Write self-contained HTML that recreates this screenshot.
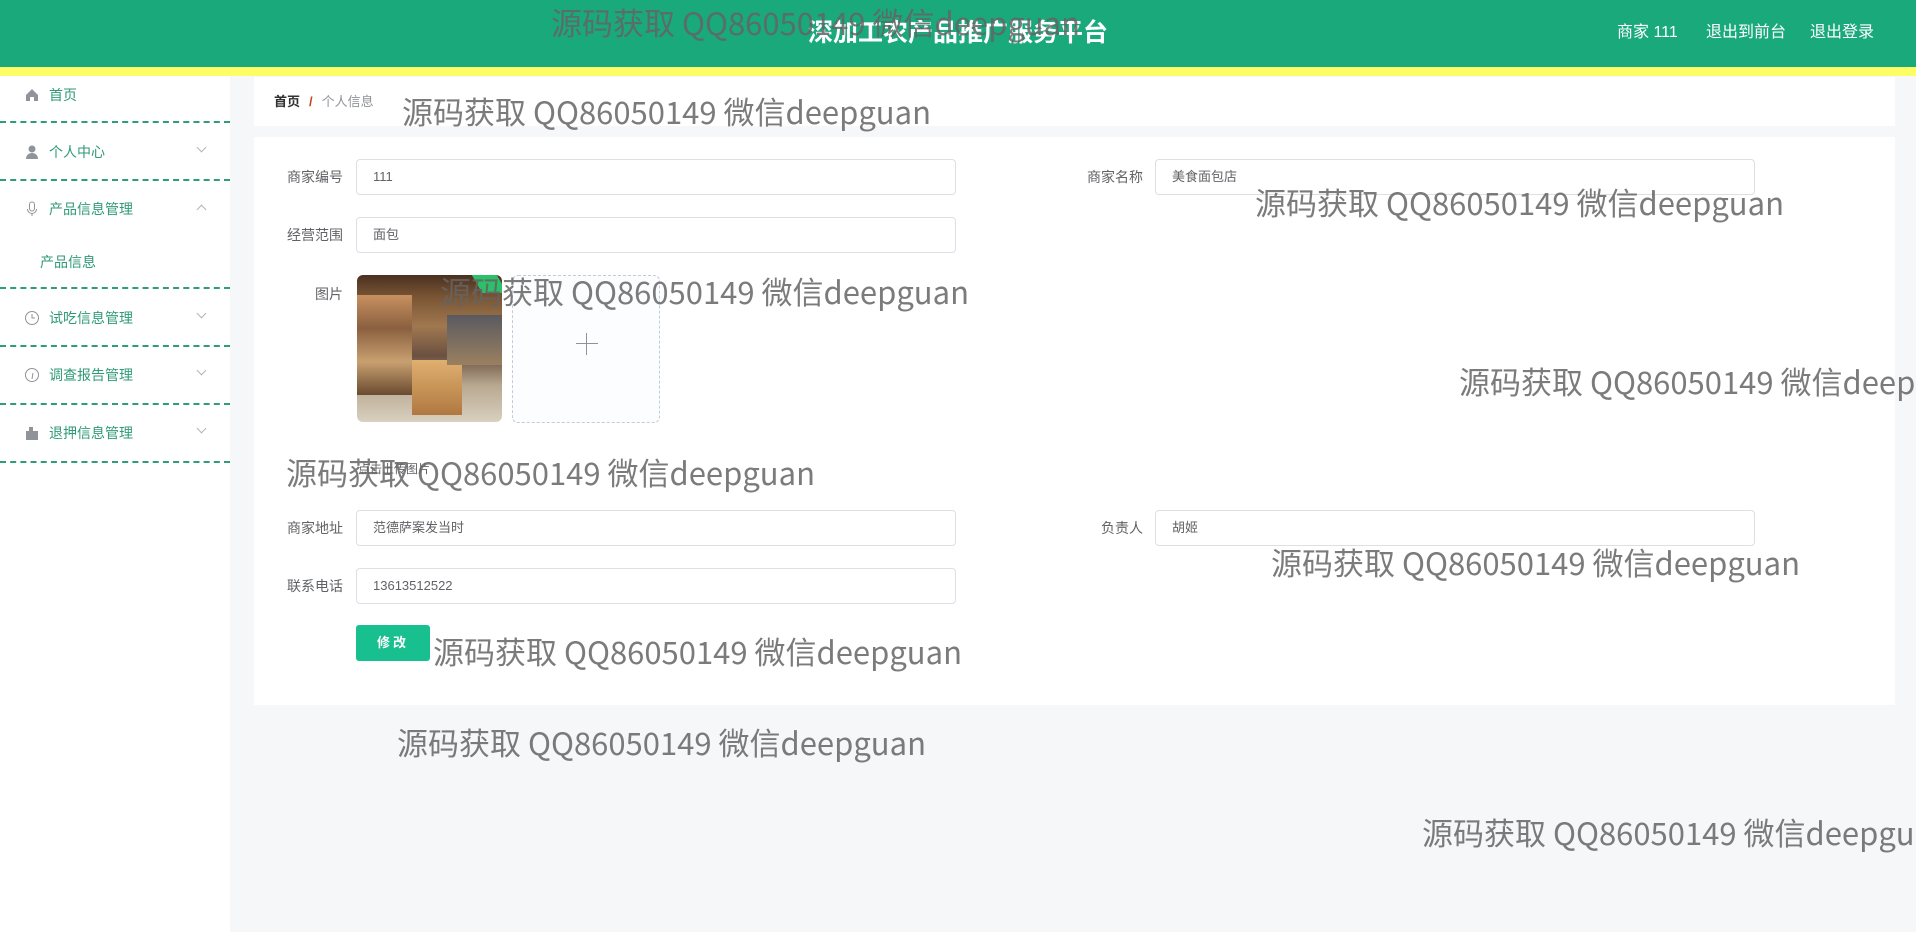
<!DOCTYPE html>
<html><head><meta charset="utf-8"><style>
*{margin:0;padding:0;box-sizing:border-box}
body{width:1916px;height:932px;overflow:hidden;background:#f6f7f9;font-family:"Liberation Sans","Noto Sans CJK SC",sans-serif;position:relative}
.a{position:absolute}
.hdr{left:0;top:0;width:1916px;height:67px;background:#1aa97a}
.yl{left:0;top:67px;width:1916px;height:9px;background:#fdfd66}
.title{left:0;width:1916px;top:15px;text-align:center;color:#fff;font-size:25px;font-weight:bold;line-height:36px}
.nav{top:22px;color:#fff;font-size:16px;line-height:22px}
.side{left:0;top:76px;width:230px;height:856px;background:#fff}
.mi{left:49px;color:#2f9a76;font-size:14px;line-height:20px}
.ic{left:24px;width:16px;height:16px}
.dl{left:0;width:230px;height:0;border-top:2px dashed #2e9e78}
.arr{left:198px;width:7px;height:7px;border-right:1px solid #b0b3b8;border-bottom:1px solid #b0b3b8;transform:rotate(45deg)}
.card{background:#fff}
.lb{font-size:14px;color:#606266;text-align:right;width:80px;line-height:20px}
.in{border:1px solid #dcdfe6;border-radius:4px;background:#fff;height:36px;font-size:13px;color:#606266;padding-left:16px;line-height:34px}
.wm{font-family:"Noto Sans CJK SC","Liberation Sans",sans-serif;font-size:31px;color:rgba(100,100,100,.85);line-height:40px;white-space:nowrap}
</style></head><body>
<div class="a hdr"></div><div class="a yl"></div>
<div class="a title">深加工农产品推广服务平台</div>
<div class="a nav" style="left:1617px">商家 111</div>
<div class="a nav" style="left:1706px">退出到前台</div>
<div class="a nav" style="left:1810px">退出登录</div>

<div class="a side"></div>
<svg class="a ic" style="top:87px" viewBox="0 0 16 16"><path d="M8 2L2 8v6h4v-4h4v4h4V8z" fill="#909399"/></svg>
<div class="a mi" style="top:85px">首页</div>
<div class="a dl" style="top:121px"></div>
<svg class="a ic" style="top:144px" viewBox="0 0 16 16"><circle cx="8" cy="5" r="3.5" fill="#909399"/><path d="M2 15c0-4 3-6 6-6s6 2 6 6z" fill="#909399"/></svg>
<div class="a mi" style="top:142px">个人中心</div><div class="a arr" style="top:144px"></div>
<div class="a dl" style="top:179px"></div>
<svg class="a ic" style="top:201px" viewBox="0 0 16 16"><rect x="5.5" y="1" width="5" height="9" rx="2.5" fill="none" stroke="#909399"/><path d="M3.5 8a4.5 4.5 0 009 0M8 12.5V15" fill="none" stroke="#909399"/></svg>
<div class="a mi" style="top:199px">产品信息管理</div><div class="a arr" style="top:206px;transform:rotate(225deg)"></div>
<div class="a mi" style="top:252px;left:40px">产品信息</div>
<div class="a dl" style="top:287px"></div>
<svg class="a ic" style="top:310px" viewBox="0 0 16 16"><circle cx="8" cy="8" r="6.5" fill="none" stroke="#909399"/><path d="M8 4v4h3" fill="none" stroke="#909399"/></svg>
<div class="a mi" style="top:308px">试吃信息管理</div><div class="a arr" style="top:310px"></div>
<div class="a dl" style="top:345px"></div>
<svg class="a ic" style="top:367px" viewBox="0 0 16 16"><circle cx="8" cy="8" r="6.5" fill="none" stroke="#909399"/><path d="M8 12l1-6" fill="none" stroke="#909399"/></svg>
<div class="a mi" style="top:365px">调查报告管理</div><div class="a arr" style="top:367px"></div>
<div class="a dl" style="top:403px"></div>
<svg class="a ic" style="top:425px" viewBox="0 0 16 16"><rect x="2" y="6" width="12" height="9" fill="#909399"/><rect x="5" y="2" width="4" height="4" fill="#909399"/></svg>
<div class="a mi" style="top:423px">退押信息管理</div><div class="a arr" style="top:425px"></div>
<div class="a dl" style="top:461px"></div>

<div class="a card" style="left:254px;top:77px;width:1641px;height:49px"></div>
<div class="a" style="left:274px;top:92px;font-size:13px;line-height:20px"><b style="color:#303133">首页</b><span style="color:#c0451f;margin:0 9px;font-weight:bold">/</span><span style="color:#909399">个人信息</span></div>

<div class="a card" style="left:254px;top:137px;width:1641px;height:568px"></div>
<div class="a lb" style="left:263px;top:167px">商家编号</div><div class="a in" style="left:356px;top:159px;width:600px">111</div>
<div class="a lb" style="left:1063px;top:167px">商家名称</div><div class="a in" style="left:1155px;top:159px;width:600px">美食面包店</div>
<div class="a lb" style="left:263px;top:225px">经营范围</div><div class="a in" style="left:356px;top:217px;width:600px">面包</div>
<div class="a lb" style="left:263px;top:284px">图片</div>
<div class="a" style="left:357px;top:275px;width:145px;height:147px;border-radius:6px;overflow:hidden;background:linear-gradient(180deg,#4a3020 0%,#7a5534 15%,#a07850 35%,#6b5040 55%,#b8a890 75%,#d8d0c0 100%)">
<div class="a" style="left:0;top:20px;width:55px;height:100px;background:linear-gradient(180deg,#c89060,#8a6040,#c8a070,#6a4a30)"></div>
<div class="a" style="left:55px;top:85px;width:50px;height:55px;background:linear-gradient(180deg,#e0b070,#b07840)"></div>
<div class="a" style="left:90px;top:40px;width:55px;height:50px;background:linear-gradient(180deg,#5a5a60,#9a8060)"></div>
<div class="a" style="left:120px;top:0;width:25px;height:18px;background:#2dc06a;transform:skewX(30deg)"></div>
</div>
<div class="a" style="left:512px;top:275px;width:148px;height:148px;border:1px dashed #c0ccda;border-radius:6px;background:#fbfdff"></div>
<div class="a" style="left:576px;top:343px;width:22px;height:1px;background:#8c939d"></div>
<div class="a" style="left:586px;top:333px;width:1px;height:22px;background:#8c939d"></div>
<div class="a" style="left:358px;top:460px;font-size:12px;color:#606266">点击上传图片</div>
<div class="a lb" style="left:263px;top:518px">商家地址</div><div class="a in" style="left:356px;top:510px;width:600px">范德萨案发当时</div>
<div class="a lb" style="left:1063px;top:518px">负责人</div><div class="a in" style="left:1155px;top:510px;width:600px">胡姬</div>
<div class="a lb" style="left:263px;top:576px">联系电话</div><div class="a in" style="left:356px;top:568px;width:600px">13613512522</div>
<div class="a" style="left:356px;top:625px;width:74px;height:36px;background:#19c08f;border-radius:3px;color:#fff;font-size:13px;font-weight:bold;text-align:center;line-height:36px;letter-spacing:3px">修改</div>

<div class="a wm" style="left:551px;top:2px">源码获取 QQ86050149 微信deepguan</div>
<div class="a wm" style="left:402px;top:91px">源码获取 QQ86050149 微信deepguan</div>
<div class="a wm" style="left:1255px;top:182px">源码获取 QQ86050149 微信deepguan</div>
<div class="a wm" style="left:440px;top:271px">源码获取 QQ86050149 微信deepguan</div>
<div class="a wm" style="left:1459px;top:361px">源码获取 QQ86050149 微信deepguan</div>
<div class="a wm" style="left:286px;top:452px">源码获取 QQ86050149 微信deepguan</div>
<div class="a wm" style="left:1271px;top:542px">源码获取 QQ86050149 微信deepguan</div>
<div class="a wm" style="left:433px;top:631px">源码获取 QQ86050149 微信deepguan</div>
<div class="a wm" style="left:397px;top:722px">源码获取 QQ86050149 微信deepguan</div>
<div class="a wm" style="left:1422px;top:812px">源码获取 QQ86050149 微信deepguan</div>
</body></html>
